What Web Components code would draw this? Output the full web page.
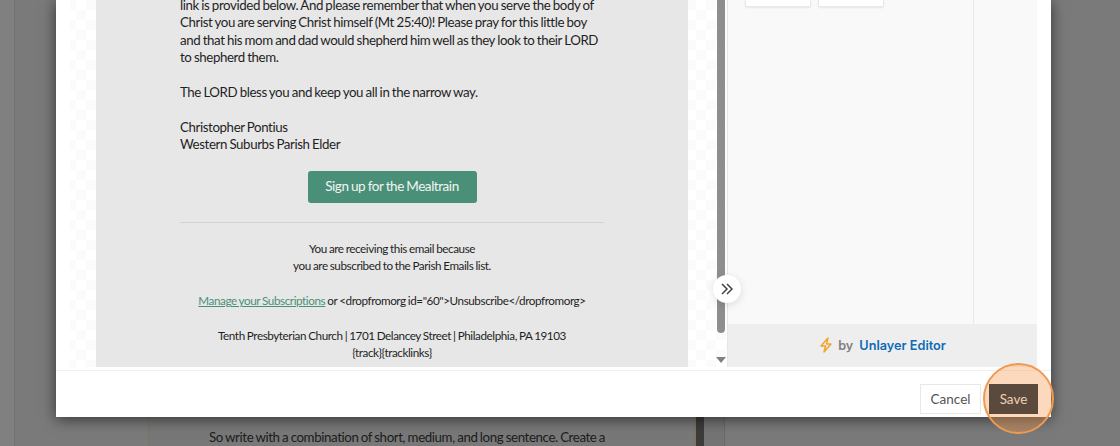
<!DOCTYPE html>
<html lang="en">
<head>
<meta charset="UTF-8">
<title>Email preview modal</title>
<style>
    html, body { margin: 0; height: 100%; overflow: hidden; }
    body { font-family: Lato, sans-serif; }
</style>
</head>
<body>
<page-backdrop>
    <editor-modal>
        <email-preview slot="canvas">
            <p>link is provided below. And please remember that when you serve the body of<br>Christ you are serving Christ himself (Mt 25:40)! Please pray for this little boy<br>and that his mom and dad would shepherd him well as they look to their LORD<br>to shepherd them.</p>
            <p>The LORD bless you and keep you all in the narrow way.</p>
            <p>Christopher Pontius<br>Western Suburbs Parish Elder</p>
        </email-preview>
        <side-panel slot="side"></side-panel>
    </editor-modal>
</page-backdrop>

<template id="backdrop-tpl">
    <style>
        :host { display: block; width: 1120px; height: 446px; position: relative; overflow: hidden; background: #7a7a7a; }
        .behind { position: absolute; inset: 0; display: flex; }
        .gutter { width: 14px; background: #808080; border-right: 1px solid #747474; }
        .rest { width: 133px; background: #7a7a7a; }
        .doc { width: 548px; background: #787878; border-left: 1px solid #7c7660; border-right: 2px solid #7c7660; box-sizing: border-box; padding: 428px 0 0 60px; font-size: 13.3px; line-height: 18px; letter-spacing: -.4px; word-spacing: -.6px; color: #1c1c1c; white-space: nowrap; overflow: hidden; }
        .bar { width: 8px; background: #3c3c3c; }
        .gap { width: 20px; background: #747474; border-right: 1px solid #6a6a6a; }
    </style>
    <div class="behind">
        <div class="gutter"></div><div class="rest"></div>
        <div class="doc">So write with a combination of short, medium, and long sentence. Create a</div>
        <div class="bar"></div><div class="gap"></div>
    </div>
    <slot></slot>
</template>

<template id="modal-tpl">
    <style>
        :host { display: flex; flex-direction: column; position: absolute; left: 56px; top: 0; width: 995px; height: 417px; background: #fff; box-shadow: 0 2px 14px rgba(0,0,0,.6); }
        .body { height: 367px; display: flex; margin-bottom: 3px; }
        .foot { flex: 1; border-top: 1px solid #f0f0f0; display: flex; justify-content: flex-end; align-items: flex-start; gap: 8px; padding: 13px 13px 0 0; }
        .btn { height: 30px; box-sizing: border-box; display: flex; align-items: center; justify-content: center; font-size: 13.5px; }
        .cancel { width: 61px; border: 1px solid #e8e8e8; background: #fff; color: #555; }
        .save { width: 49px; background: #5a4a3d; color: #ecd0b2; position: relative; z-index: 1; }
        .spot { position: absolute; left: 927px; top: 363px; width: 71px; height: 71px; box-sizing: border-box; border-radius: 50%; border: 2px solid #f09a50; background: rgba(247,150,70,.36); }
    </style>
    <div class="body">
        <slot name="canvas"></slot>
        <slot name="side"></slot>
    </div>
    <div class="foot">
        <div class="btn cancel">Cancel</div>
        <div class="btn save">Save</div>
    </div>
    <div class="spot"></div>
</template>

<template id="preview-tpl">
    <style>
        :host { display: block; width: 671px; height: 367px; flex: none; position: relative; overflow: hidden;
            background: linear-gradient(#fff, #fff) 0 0 / 14px 100% no-repeat, repeating-conic-gradient(#fbfbfb 0 25%, #fff 0 50%) 0 0 / 20px 20px; }
        .mail { margin-left: 40px; width: 592px; height: 367px; box-sizing: border-box; background: #e7e7e7; padding: 0 84px; color: #1f1f1f; font-size: 13.3px; letter-spacing: -.4px; word-spacing: -.6px; line-height: 17.4px; overflow: hidden; }
        .copy { margin-top: -3px; }
        ::slotted(p) { margin: 0 0 17.4px; white-space: nowrap; }
        .cta { display: flex; justify-content: center; width: 424px; margin-top: 17px; }
        .cta span { width: 169px; height: 32px; background: #4a9078; color: #f1f5f3; border-radius: 3px; display: flex; align-items: center; justify-content: center; font-size: 13.5px; letter-spacing: -.45px; word-spacing: -.5px; }
        hr { width: 424px; margin: 19px 0 0; border: 0; border-top: 1px solid #d3d3d3; }
        .legal { width: 424px; margin-top: 17px; text-align: center; font-size: 11.7px; letter-spacing: -.42px; word-spacing: -.5px; line-height: 17.4px; white-space: nowrap; }
        .legal a { color: #4a9078; text-decoration: underline; }
        .scroll { position: absolute; left: 661px; top: 0; width: 8px; height: 333px; background: #8e8e8e; border-radius: 0 0 4px 4px; }
        .down { position: absolute; left: 660px; top: 357px; width: 0; height: 0; border: 5px solid transparent; border-top: 6px solid #808080; border-bottom: 0; }
    </style>
    <div class="mail">
        <div class="copy"><slot></slot></div>
        <div class="cta"><span>Sign up for the Mealtrain</span></div>
        <hr>
        <div class="legal">
            You are receiving this email because<br>
            you are subscribed to the Parish Emails list.<br><br>
            <a>Manage your Subscriptions</a> or &lt;dropfromorg id="60"&gt;Unsubscribe&lt;/dropfromorg&gt;<br><br>
            Tenth Presbyterian Church | 1701 Delancey Street | Philadelphia, PA 19103<br>
            {track}{tracklinks}
        </div>
    </div>
    <div class="scroll"></div>
    <div class="down"></div>
</template>

<template id="side-tpl">
    <style>
        :host { display: flex; flex-direction: column; flex: none; width: 310px; height: 367px; box-sizing: border-box; position: relative; border-left: 1px solid #e6e6e6; background: #f9f9f9; font-family: Inter, sans-serif; }
        .top { flex: 1; display: flex; }
        .tools { width: 246px; border-right: 1px solid #e8e8e8; padding-left: 17px; display: flex; gap: 7px; align-items: flex-start; box-sizing: border-box; }
        .tools i { display: block; width: 66px; height: 7px; box-sizing: border-box; background: #fff; border: 1px solid #e8e8e8; border-top: 0; border-radius: 0 0 2px 2px; box-shadow: 0 1px 2px rgba(0,0,0,.08); }
        .brand { height: 43px; box-sizing: border-box; padding-bottom: 1px; background: #eee; display: flex; align-items: center; justify-content: center; gap: 5px; font-size: 12.7px; font-weight: 600; color: #808080; }
        .brand b { color: #0f6cb4; font-weight: 600; margin-left: 1px; }
        .toggle { position: absolute; left: -15px; top: 275px; width: 28px; height: 28px; border-radius: 50%; background: #fff; box-shadow: 0 2px 8px rgba(0,0,0,.12); display: flex; align-items: center; justify-content: center; }
    </style>
    <div class="top">
        <div class="tools"><i></i><i></i></div>
    </div>
    <div class="brand">
        <svg width="14" height="16" viewBox="0 0 14 16" fill="none" stroke="#f2a52e" stroke-width="1.5" stroke-linejoin="round"><path d="M9 1 2 9h4.500L5 15l7-8H7.500z"/></svg>
        <span>by</span> <b>Unlayer Editor</b>
    </div>
    <div class="toggle">
        <svg width="12" height="12" viewBox="0 0 12 12" fill="none" stroke="#444" stroke-width="1.5"><path d="M1 1l5 5-5 5M6 1l5 5-5 5"/></svg>
    </div>
</template>

<script>
    // every element here is the same: clone its template into an open shadow root
    class TemplatedElement extends HTMLElement {
        constructor() {
            super();
            this.attachShadow({ mode: 'open' });
            const tpl = document.getElementById(this.constructor.templateId);
            this.shadowRoot.appendChild(tpl.content.cloneNode(true));
        }
    }
    class PageBackdrop extends TemplatedElement { static templateId = 'backdrop-tpl'; }
    class EditorModal extends TemplatedElement { static templateId = 'modal-tpl'; }
    class EmailPreview extends TemplatedElement { static templateId = 'preview-tpl'; }
    class SidePanel extends TemplatedElement { static templateId = 'side-tpl'; }

    customElements.define('page-backdrop', PageBackdrop);
    customElements.define('editor-modal', EditorModal);
    customElements.define('email-preview', EmailPreview);
    customElements.define('side-panel', SidePanel);
</script>
</body>
</html>
